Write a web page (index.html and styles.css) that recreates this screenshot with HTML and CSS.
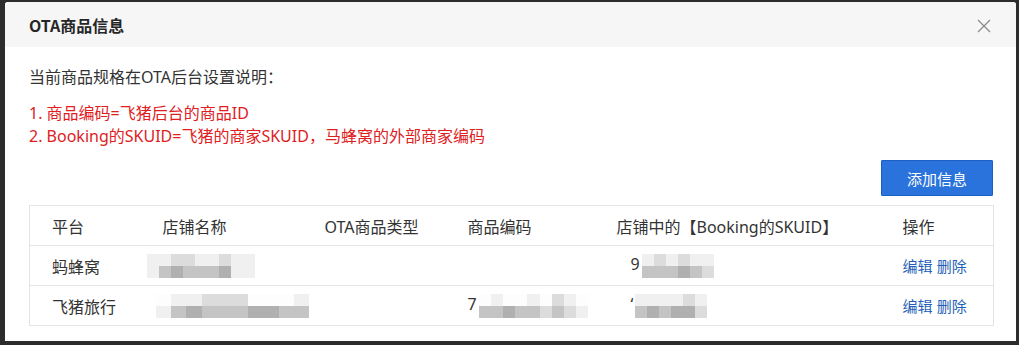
FILE: index.html
```html
<!DOCTYPE html>
<html lang="zh-CN">
  <head>
    <meta charset="utf-8">
    <title>OTA商品信息</title>
    <link rel="stylesheet" href="styles.css">
  </head>
  <body>
    <div class="modal">
      <div class="modal-head">
        <span class="modal-title">OTA商品信息</span>
        <span class="modal-close">
          <svg width="14" height="14" viewBox="0 0 14 14"><path d="M1 1L13 13M13 1L1 13" stroke="#8c8c8c" stroke-width="1.3" fill="none"/></svg>
        </span>
      </div>
      <div class="modal-body">
        <p class="intro">当前商品规格在OTA后台设置说明：</p>
        <div class="notes">
          <p>1. 商品编码=飞猪后台的商品ID</p>
          <p>2. Booking的SKUID=飞猪的商家SKUID，马蜂窝的外部商家编码</p>
        </div>
        <div class="toolbar">
          <button class="btn-add">添加信息</button>
        </div>
        <table class="grid">
          <colgroup>
            <col class="c1"><col class="c2"><col class="c3"><col class="c4"><col class="c5"><col class="c6">
          </colgroup>
          <thead>
            <tr><th>平台</th><th>店铺名称</th><th>OTA商品类型</th><th>商品编码</th><th>店铺中的【Booking的SKUID】</th><th>操作</th></tr>
          </thead>
          <tbody>
            <tr>
              <td>蚂蜂窝</td>
              <td>
                <span class="mosaic m-shop1">
                  <i class="g0"></i><i class="g0"></i><i class="g1"></i><i class="g1"></i><i class="g0"></i><i class="g0"></i><i class="g1"></i><i class="g0"></i><i class="g0"></i>
                  <i class="g0"></i><i class="g2"></i><i class="g3"></i><i class="g2"></i><i class="g2"></i><i class="g2"></i><i class="g3"></i><i class="g0"></i><i class="g0"></i>
                </span>
              </td>
              <td></td>
              <td></td>
              <td><span class="sku">9</span><span class="mosaic m-sku">
                  <i class="g0"></i><i class="g1"></i><i class="g0"></i><i class="g1"></i><i class="g0"></i><i class="g0"></i>
                  <i class="g2"></i><i class="g2"></i><i class="g2"></i><i class="g3"></i><i class="g2"></i><i class="g1"></i>
                </span></td>
              <td><a class="link">编辑</a> <a class="link">删除</a></td>
            </tr>
            <tr>
              <td>飞猪旅行</td>
              <td>
                <span class="mosaic m-shop2">
                  <i class="g9"></i><i class="g0"></i><i class="g0"></i><i class="g1"></i><i class="g1"></i><i class="g1"></i><i class="g9"></i><i class="g9"></i><i class="g9"></i><i class="g0"></i>
                  <i class="g0"></i><i class="g2"></i><i class="g3"></i><i class="g2"></i><i class="g2"></i><i class="g2"></i><i class="g3"></i><i class="g3"></i><i class="g2"></i><i class="g2"></i>
                </span>
              </td>
              <td></td>
              <td><span class="code">7</span><span class="mosaic m-code">
                  <i class="g9"></i><i class="g0"></i><i class="g9"></i><i class="g9"></i><i class="g0"></i><i class="g9"></i><i class="g1"></i><i class="g0"></i><i class="g9"></i>
                  <i class="g2"></i><i class="g2"></i><i class="g3"></i><i class="g2"></i><i class="g2"></i><i class="g1"></i><i class="g2"></i><i class="g1"></i><i class="g0"></i>
                </span></td>
              <td><span class="sku">‘</span><span class="mosaic m-sku">
                  <i class="g0"></i><i class="g0"></i><i class="g0"></i><i class="g0"></i><i class="g1"></i><i class="g0"></i>
                  <i class="g2"></i><i class="g3"></i><i class="g2"></i><i class="g3"></i><i class="g3"></i><i class="g1"></i>
                </span></td>
              <td><a class="link">编辑</a> <a class="link">删除</a></td>
            </tr>
          </tbody>
        </table>
      </div>
    </div>
  </body>
</html>
```

FILE: styles.css
```css
html, body { margin: 0; }
body { background: #2c2c2c; font-family: "Noto Sans", "Noto Sans CJK SC", sans-serif; font-size: 16px; color: #333; padding: 2px 3px 2px 5px; height: 341px; box-sizing: border-box; }
p { margin: 0; }

.modal { background: #fff; border-radius: 3px; overflow: hidden; height: 341px; display: flex; flex-direction: column; }
.modal-head { height: 45px; background: #f6f6f6; display: flex; align-items: center; justify-content: space-between; padding: 0 24px; }
.modal-title { font-size: 16px; font-weight: bold; color: #262626; font-family: "Noto Sans CJK SC", sans-serif; }
.modal-close { display: flex; width: 14px; height: 14px; margin-right: 1px; margin-top: 2px; }

.modal-body { padding: 20px 23px 0 24px; }
.intro { line-height: 20px; }
.notes { margin-top: 15px; color: #e0201e; line-height: 23px; }
.toolbar { display: flex; justify-content: flex-end; margin-top: 12px; }
.btn-add { width: 112px; height: 36px; border: 1px solid #1b5fc4; background: #2a73dc; color: #fff; font-family: inherit; font-size: 15px; border-radius: 1px; padding: 0; }

.grid { width: 964px; margin-top: 9px; border-collapse: collapse; border: 1px solid #e4e4e4; table-layout: fixed; }
.grid th, .grid td { height: 39px; padding: 0 0 0 22px; text-align: left; font-weight: normal; border-top: 1px solid #e4e4e4; white-space: nowrap; }
.grid th { color: #333; }
.c1 { width: 111px; }
.c2 { width: 162px; }
.c3 { width: 143px; }
.c4 { width: 149px; }
.c5 { width: 286px; }
.c6 { width: 113px; }

.link { color: #1f5fb8; font-size: 15px; cursor: pointer; }

.mosaic { display: inline-grid; grid-auto-rows: 12px; grid-auto-columns: 12px; vertical-align: middle; }
.mosaic i { display: block; }
.m-shop1 { grid-template-columns: repeat(9, 12px); margin-left: -16px; }
.m-shop2 { margin-left: -7px; grid-template-columns: repeat(10, 15.4px); }
.m-code { grid-template-columns: repeat(9, 12.2px); margin-left: 2px; }
.m-sku { grid-template-columns: repeat(6, 12px); margin-left: 2px; }
.sku { display: inline-block; margin-left: 14px; }
.g9 { background: #fdfdfd; }
.g0 { background: #f0f0f0; }
.g1 { background: #dcdcdc; }
.g2 { background: #c4c4c4; }
.g3 { background: #b0b0b0; }
```
